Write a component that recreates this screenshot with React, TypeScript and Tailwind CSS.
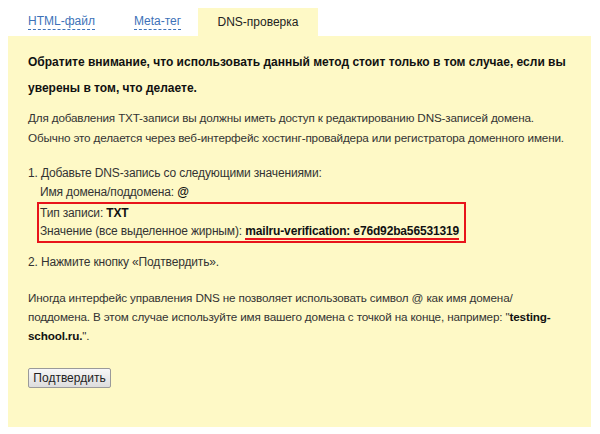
import React from "react";

export default function App() {
  return (
    <div
      className="w-[600px] h-[434px] bg-white text-[12px] text-[#333]"
      style={{ fontFamily: '"Liberation Sans", Arial, sans-serif' }}
    >
      <div className="flex items-end h-[36px] pl-[28px]">
        <div className="h-[28px] w-[106px] flex items-center">
          <span className="text-[#3d72b8] border-b border-dashed border-[#3d72b8] leading-[15px]">HTML-файл</span>
        </div>
        <div className="h-[28px] w-[64px] flex items-center">
          <span className="text-[#3d72b8] border-b border-dashed border-[#3d72b8] leading-[15px]">Meta-тег</span>
        </div>
        <div className="h-[28px] w-[120px] flex items-center justify-center bg-[#fef9c6] text-[#222]">
          DNS-проверка
        </div>
      </div>
      <div className="mx-[8px] w-[583px] h-[391px] bg-[#fef9c6] pl-[20px] pr-[12px] pt-[13px] tracking-[-0.15px]">
        <p className="font-bold text-[#111] leading-[26px] tracking-[0px]">
          Обратите внимание, что использовать данный метод стоит только в том случае, если вы уверены в том, что делаете.
        </p>
        <p className="mt-[7px] leading-[20px] text-[11.7px] whitespace-nowrap">
          Для добавления TXT-записи вы должны иметь доступ к редактированию DNS-записей домена.
          <br />
          Обычно это делается через веб-интерфейс хостинг-провайдера или регистратора доменного имени.
        </p>
        <div className="mt-[16px] leading-[19px]">
          <div>1. Добавьте DNS-запись со следующими значениями:</div>
          <div className="pl-[12px]">
            Имя домена/поддомена: <b className="text-[#111]">@</b>
          </div>
          <div className="ml-[9px] w-[429px] border-2 border-[#e8141b] pl-[1px] pb-[1px] leading-[18px]">
            <div>
              Тип записи: <b className="text-[#111]">TXT</b>
            </div>
            <div>
              Значение (все выделенное жирным):{" "}
              <b className="text-[#111] border-b-2 border-[#e8141b]">mailru-verification: e76d92ba56531319</b>
            </div>
          </div>
          <div className="mt-[10px]">2. Нажмите кнопку «Подтвердить».</div>
        </div>
        <p className="mt-[16px] leading-[19px] text-[11.7px] pr-[2px]">
          Иногда интерфейс управления DNS не позволяет использовать символ @ как имя домена/ поддомена. В этом случае используйте имя вашего домена с точкой на конце, например: "<b className="text-[#111]">testing-school.ru.</b>".
        </p>
        <button className="mt-[23px] h-[20px] w-[83px] flex items-center justify-center border border-[#9a9a9a] rounded-[2px] bg-gradient-to-b from-[#f7f7f7] to-[#dddddd] text-[#222] text-[12px] leading-[18px] tracking-[0px]">
          Подтвердить
        </button>
      </div>
    </div>
  );
}
